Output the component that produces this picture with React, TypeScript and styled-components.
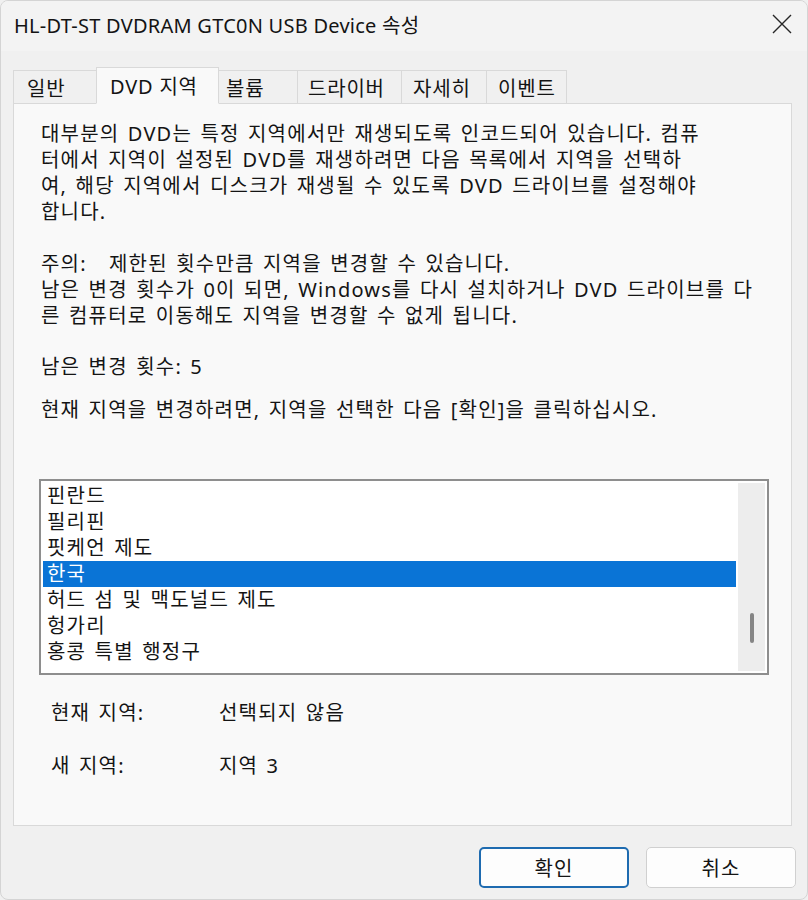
import React from "react";
import styled, { createGlobalStyle } from "styled-components";

const Global = createGlobalStyle`
  html, body { margin: 0; padding: 0; background: #f0f0f0; }
  * { box-sizing: border-box; }
`;

const FONT = `"Noto Sans", "Noto Sans CJK KR", sans-serif`;

const Window = styled.div`
  width: 808px;
  height: 900px;
  background: #f0f0f0;
  border: 1px solid #d4d4d4;
  border-radius: 8px;
  display: flex;
  flex-direction: column;
  font-family: ${FONT};
  color: #141414;
  overflow: hidden;
`;

const TitleBar = styled.div`
  height: 50px;
  flex: none;
  display: flex;
  align-items: center;
  justify-content: space-between;
  padding: 0 14px 4px 13px;
  background: #f3f3f3;
`;

const Title = styled.div`
  font-size: 20px;
  letter-spacing: 0.25px;
  color: #141414;
`;

const CloseButton = styled.div`
  width: 22px;
  height: 22px;
  display: flex;
  align-items: center;
  justify-content: center;
`;

const Body = styled.div`
  flex: 1;
  display: flex;
  flex-direction: column;
  padding: 17px 15px 0 12px;
`;

const TabStrip = styled.div`
  display: flex;
  align-items: flex-end;
  height: 36px;
  position: relative;
  z-index: 1;
  margin-bottom: -1px;
`;

const Tab = styled.div<{ $w: number; $active?: boolean; $pl: number }>`
  width: ${(p) => p.$w}px;
  height: ${(p) => (p.$active ? 37 : 34)}px;
  padding-left: ${(p) => p.$pl}px;
  display: flex;
  align-items: center;
  font-size: 20px;
  letter-spacing: 0.8px;
  white-space: nowrap;
  background: ${(p) => (p.$active ? "#f9f9f9" : "#f0f0f0")};
  border: 1px solid #d9d9d9;
  border-bottom: ${(p) => (p.$active ? "1px solid #f9f9f9" : "1px solid #d9d9d9")};
  margin-left: ${(p) => (p.$active ? "-2px" : "-1px")};
  margin-right: ${(p) => (p.$active ? "-2px" : "0")};
  position: relative;
  z-index: ${(p) => (p.$active ? 2 : 1)};
  &:first-child { margin-left: 0; }
`;

const Panel = styled.div`
  height: 723px;
  background: #f9f9f9;
  border: 1px solid #d9d9d9;
  padding: 17px 27px 0 27px;
  display: flex;
  flex-direction: column;
`;

const Para = styled.div<{ $mt?: number }>`
  margin-top: ${(p) => p.$mt ?? 0}px;
  font-size: 20px;
  line-height: 26px;
  letter-spacing: 1.2px;
  word-spacing: 2px;
`;

const Line = styled.div`
  white-space: nowrap;
`;

const NoteLabel = styled.span`
  display: inline-block;
  width: 68px;
`;

const ListBox = styled.div`
  margin-top: 56px;
  margin-left: -2px;
  width: 730px;
  height: 196px;
  border: 2px solid #8e8e8e;
  background: #ffffff;
  display: flex;
  padding: 2px;
`;

const Items = styled.div`
  flex: 1;
  display: flex;
  flex-direction: column;
`;

const Item = styled.div<{ $selected?: boolean }>`
  height: 26px;
  line-height: 26px;
  padding-left: 4px;
  font-size: 20px;
  letter-spacing: 1.2px;
  word-spacing: 2px;
  white-space: nowrap;
  background: ${(p) => (p.$selected ? "#0a74d6" : "transparent")};
  color: ${(p) => (p.$selected ? "#ffffff" : "#141414")};
`;

const ScrollTrack = styled.div`
  width: 27px;
  margin-left: 2px;
  background: #ededed;
  display: flex;
  flex-direction: column;
  align-items: center;
  padding-top: 130px;
`;

const ScrollThumb = styled.div`
  width: 4px;
  height: 30px;
  border-radius: 2px;
  background: #858585;
`;

const InfoGrid = styled.div`
  margin-top: 25px;
  margin-left: 10px;
  display: grid;
  grid-template-columns: 168px auto;
  row-gap: 27px;
  font-size: 20px;
  line-height: 26px;
  letter-spacing: 1.2px;
  word-spacing: 2px;
  white-space: nowrap;
`;

const Footer = styled.div`
  flex: 1;
  display: flex;
  justify-content: flex-end;
  align-items: flex-start;
  gap: 17px;
  padding: 21px 11px 0 0;
`;

const Button = styled.div<{ $primary?: boolean }>`
  width: 150px;
  height: 41px;
  border-radius: 5px;
  background: #fdfdfd;
  border: ${(p) => (p.$primary ? "2px solid #1e6bb0" : "1px solid #d0d0d0")};
  display: flex;
  align-items: center;
  justify-content: center;
  font-size: 20px;
  letter-spacing: 1.2px;
  color: #141414;
`;

const tabs = [
  { label: "일반", w: 85, pl: 13 },
  { label: "DVD 지역", w: 123, pl: 13, active: true },
  { label: "볼륨", w: 82, pl: 9 },
  { label: "드라이버", w: 105, pl: 10 },
  { label: "자세히", w: 86, pl: 11 },
  { label: "이벤트", w: 81, pl: 11 },
];

const regions = ["핀란드", "필리핀", "핏케언 제도", "한국", "허드 섬 및 맥도널드 제도", "헝가리", "홍콩 특별 행정구"];

export default function App() {
  return (
    <>
      <Global />
      <Window>
        <TitleBar>
          <Title>HL-DT-ST DVDRAM GTC0N USB Device 속성</Title>
          <CloseButton>
            <svg width="20" height="20" viewBox="0 0 20 20">
              <path d="M1 1 L19 19 M19 1 L1 19" stroke="#262626" strokeWidth="1.4" fill="none" />
            </svg>
          </CloseButton>
        </TitleBar>
        <Body>
          <TabStrip>
            {tabs.map((t) => (
              <Tab key={t.label} $w={t.w} $pl={t.pl} $active={t.active}>
                {t.label}
              </Tab>
            ))}
          </TabStrip>
          <Panel>
            <Para>
              <Line>대부분의 DVD는 특정 지역에서만 재생되도록 인코드되어 있습니다. 컴퓨</Line>
              <Line>터에서 지역이 설정된 DVD를 재생하려면 다음 목록에서 지역을 선택하</Line>
              <Line>여, 해당 지역에서 디스크가 재생될 수 있도록 DVD 드라이브를 설정해야</Line>
              <Line>합니다.</Line>
            </Para>
            <Para $mt={26}>
              <Line>
                <NoteLabel>주의:</NoteLabel>제한된 횟수만큼 지역을 변경할 수 있습니다.
              </Line>
              <Line>남은 변경 횟수가 0이 되면, Windows를 다시 설치하거나 DVD 드라이브를 다</Line>
              <Line>른 컴퓨터로 이동해도 지역을 변경할 수 없게 됩니다.</Line>
            </Para>
            <Para $mt={25}>
              <Line>남은 변경 횟수: 5</Line>
            </Para>
            <Para $mt={17}>
              <Line>현재 지역을 변경하려면, 지역을 선택한 다음 [확인]을 클릭하십시오.</Line>
            </Para>
            <ListBox>
              <Items>
                {regions.map((r) => (
                  <Item key={r} $selected={r === "한국"}>
                    {r}
                  </Item>
                ))}
              </Items>
              <ScrollTrack>
                <ScrollThumb />
              </ScrollTrack>
            </ListBox>
            <InfoGrid>
              <span>현재 지역:</span>
              <span>선택되지 않음</span>
              <span>새 지역:</span>
              <span>지역 3</span>
            </InfoGrid>
          </Panel>
        </Body>
        <Footer>
          <Button $primary>확인</Button>
          <Button>취소</Button>
        </Footer>
      </Window>
    </>
  );
}
